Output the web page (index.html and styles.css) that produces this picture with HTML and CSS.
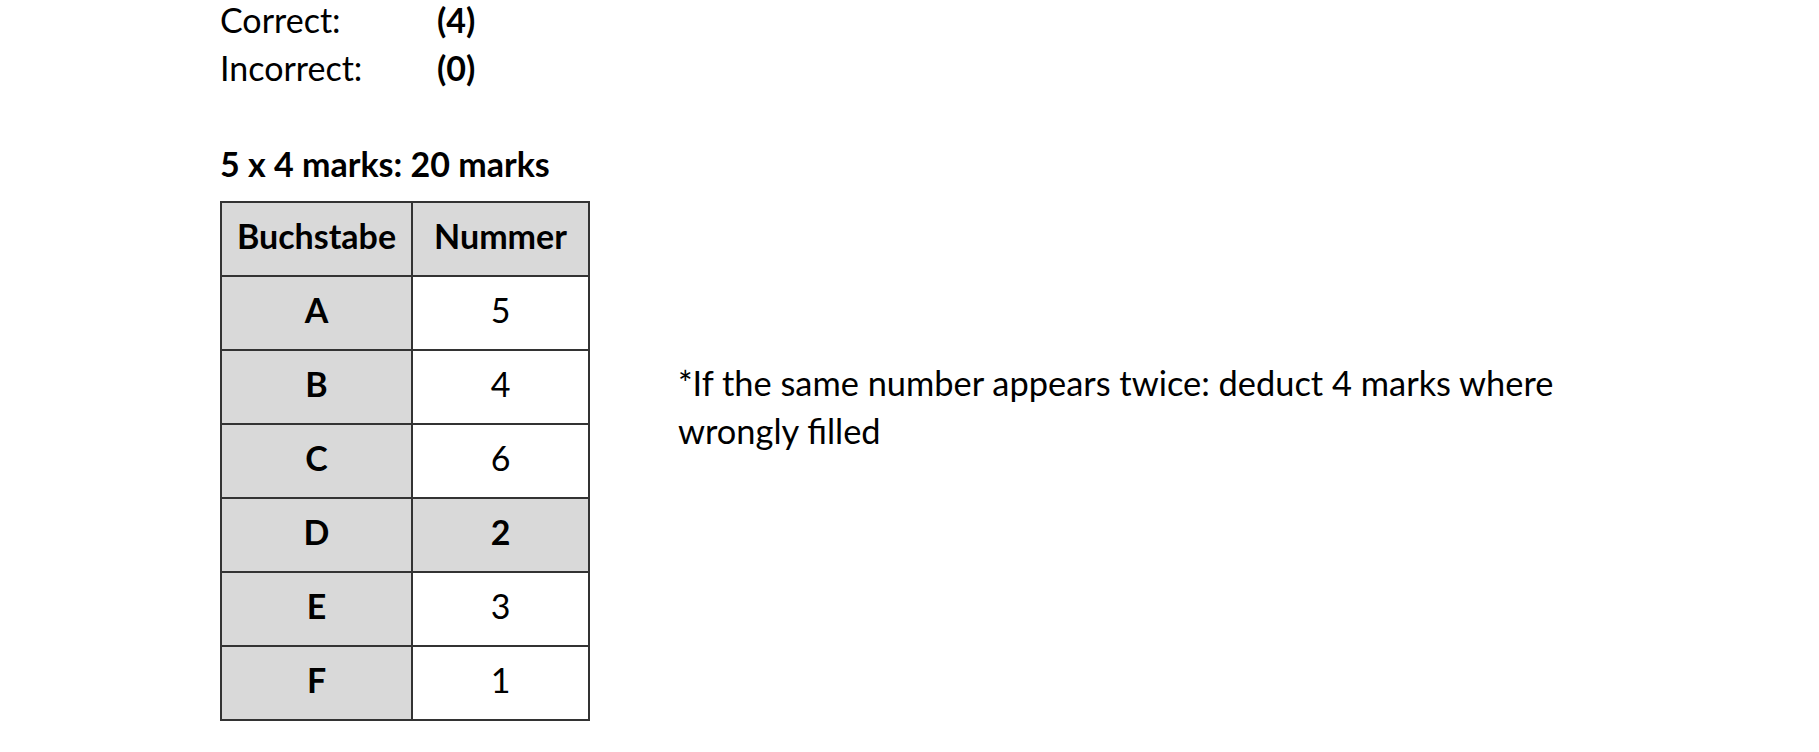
FILE: index.html
```html
<!DOCTYPE html>
<html>
<head>
<meta charset="utf-8">
<link rel="stylesheet" href="styles.css">
</head>
<body>
<div class="page">
  <div class="score">
    <div class="score-row"><span class="label">Correct:</span><span class="val">(4)</span></div>
    <div class="score-row"><span class="label">Incorrect:</span><span class="val">(0)</span></div>
  </div>
  <div class="heading">5 x 4 marks: 20 marks</div>
  <div class="content">
    <table class="answers">
      <tr><th class="col1">Buchstabe</th><th class="col2">Nummer</th></tr>
      <tr><th>A</th><td>5</td></tr>
      <tr><th>B</th><td>4</td></tr>
      <tr><th>C</th><td>6</td></tr>
      <tr><th>D</th><td class="hl">2</td></tr>
      <tr><th>E</th><td>3</td></tr>
      <tr><th>F</th><td>1</td></tr>
    </table>
    <p class="note">*If the same number appears twice: deduct 4 marks where<br>wrongly filled</p>
  </div>
</div>
</body>
</html>
```

FILE: styles.css
```css
html, body {
  margin: 0;
  padding: 0;
  background: #ffffff;
}
.page {
  font-family: "Lato", "Liberation Sans", sans-serif;
  font-size: 34px;
  color: #000;
  padding-left: 220px;
}
.score-row {
  display: flex;
  height: 48px;
  line-height: 40px;
}
.label {
  width: 217px;
}
.val {
  font-weight: bold;
}
.heading {
  font-weight: bold;
  margin-top: 44px;
  line-height: 48px;
  height: 50px;
}
.content {
  display: flex;
  align-items: flex-start;
  margin-top: 11px;
}
.answers {
  border-collapse: collapse;
  border: 2px solid #333;
}
.answers th, .answers td {
  border: 2px solid #333;
  height: 74px;
  padding: 0 0 7px 0;
  text-align: center;
  vertical-align: middle;
  box-sizing: border-box;
}
.answers th {
  background: #d9d9d9;
  font-weight: bold;
}
.answers td {
  background: #ffffff;
  font-weight: normal;
}
.answers td.hl {
  background: #d9d9d9;
  font-weight: bold;
}
.col1 { width: 191px; }
.col2 { width: 177px; }
.note {
  margin: 158px 0 0 88px;
  line-height: 48px;
  font-size: 34.4px;
}
```
